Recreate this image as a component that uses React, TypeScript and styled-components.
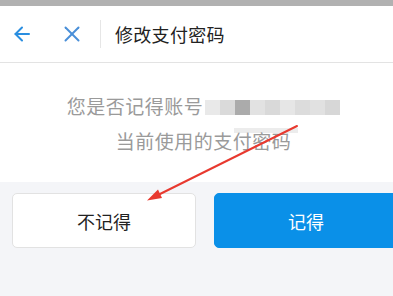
import React from 'react';
import styled, { createGlobalStyle } from 'styled-components';

const GlobalStyle = createGlobalStyle`
  html, body {
    margin: 0;
    padding: 0;
    background: #f4f5f8;
  }
  body {
    font-family: "Noto Sans CJK SC", "Noto Sans", sans-serif;
  }
`;

const Page = styled.div`
  position: relative;
  width: 393px;
  height: 296px;
  overflow: hidden;
  background: #f4f5f8;
`;

const StatusStrip = styled.div`
  height: 6px;
  background: #b1b1b1;
`;

const Header = styled.header`
  height: 56px;
  display: flex;
  align-items: center;
  background: #fff;
  border-bottom: 1px solid #e3e3e3;
`;

const NavIcon = styled.span<{ left: number }>`
  display: flex;
  align-items: center;
  margin-left: ${p => p.left}px;
`;

const Divider = styled.span`
  width: 1px;
  height: 28px;
  margin-left: 19px;
  background: #e6e6e6;
`;

const Title = styled.h1`
  margin: 0 0 0 14px;
  font-size: 18px;
  font-weight: 400;
  color: #222;
  letter-spacing: 0.3px;
`;

const Prompt = styled.section`
  height: 94px;
  padding: 25px 0 0 14px;
  background: #fff;
  text-align: center;
  font-size: 19px;
  line-height: 35px;
  letter-spacing: 0.5px;
  color: #9a9a9a;
`;

const Line = styled.div`
  white-space: nowrap;
`;

const Mosaic = styled.span`
  display: inline-flex;
  vertical-align: middle;
  height: 15px;
  margin: 0 0 3px 2px;
`;

const MosaicCell = styled.span<{ shade: string }>`
  width: 15px;
  height: 100%;
  background: ${p => p.shade};
`;

const Smudge = styled.div`
  position: absolute;
  left: 234px;
  top: 128px;
  width: 64px;
  height: 5px;
  background: rgba(200, 200, 200, 0.35);
`;

const Actions = styled.div`
  display: flex;
  gap: 18px;
  padding: 11px 12px;
`;

const ActionButton = styled.button<{ primary?: boolean }>`
  flex: 0 0 184px;
  height: 55px;
  border-radius: 5px;
  font-family: inherit;
  font-size: 18px;
  cursor: pointer;
  border: 1px solid ${p => (p.primary ? '#0a90e8' : '#e2e2e2')};
  background: ${p => (p.primary ? '#0a90e8' : '#fff')};
  color: ${p => (p.primary ? '#fff' : '#222')};
`;

const ArrowLayer = styled.svg`
  position: absolute;
  left: 0;
  top: 0;
  pointer-events: none;
`;

const shades = ['#e9e9e9', '#dadada', '#ababab', '#e2e2e2', '#d9d9d9', '#e6e6e6', '#dcdcdc', '#e1e1e1', '#d7d7d7'];

const App: React.FC = () => {
  return (
    <Page>
      <GlobalStyle />
      <StatusStrip />
      <Header>
        <NavIcon left={13}>
          <svg width="18" height="18" viewBox="0 0 18 18" fill="none" stroke="#2a8ee0" strokeWidth="2" strokeLinecap="round" strokeLinejoin="round">
            <path d="M16 9H2.5" />
            <path d="M9 2.5L2.5 9 9 15.5" />
          </svg>
        </NavIcon>
        <NavIcon left={32}>
          <svg width="18" height="18" viewBox="0 0 18 18" fill="none" stroke="#4a8fd8" strokeWidth="2" strokeLinecap="round">
            <path d="M2.5 2.5l13 13" />
            <path d="M15.5 2.5l-13 13" />
          </svg>
        </NavIcon>
        <Divider />
        <Title>修改支付密码</Title>
      </Header>
      <Prompt>
        <Line>
          您是否记得账号
          <Mosaic>
            {shades.map((s, i) => (
              <MosaicCell key={i} shade={s} />
            ))}
          </Mosaic>
        </Line>
        <Line>当前使用的支付密码</Line>
      </Prompt>
      <Actions>
        <ActionButton>不记得</ActionButton>
        <ActionButton primary>记得</ActionButton>
      </Actions>
      <Smudge />
      <ArrowLayer width="393" height="296" viewBox="0 0 393 296">
        <line x1="297" y1="126" x2="156" y2="196" stroke="#e8392f" strokeWidth="2" strokeLinecap="round" />
        <path d="M147 200.5L158 189.5 162 198z" fill="#e8392f" />
      </ArrowLayer>
    </Page>
  );
};

export default App;
